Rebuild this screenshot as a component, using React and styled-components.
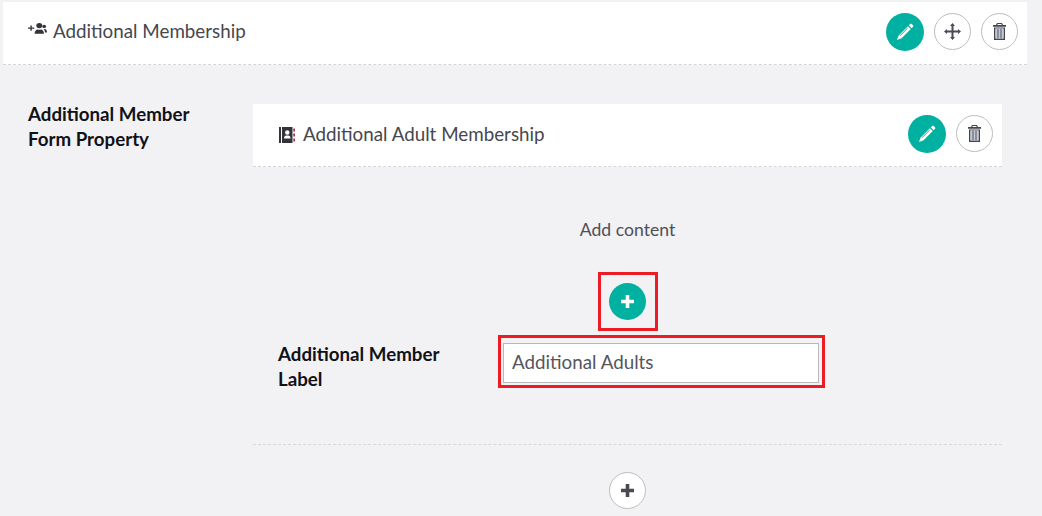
import React from 'react';
import styled, { createGlobalStyle } from 'styled-components';

const GlobalStyle = createGlobalStyle`
  html, body {
    margin: 0;
    padding: 0;
    background: #f2f2f5;
    overflow: hidden;
  }
  body {
    font-family: "Lato", "Open Sans", sans-serif;
    color: #4a4a52;
  }
`;

const Page = styled.div`
  width: 1042px;
  height: 516px;
  overflow: hidden;
  padding: 2px 15px 0 3px;
  box-sizing: border-box;
`;

const Header = styled.div`
  display: flex;
  align-items: center;
  height: 63px;
  box-sizing: border-box;
  background: #fff;
  border-bottom: 1px dashed #d5d5d8;
  padding: 0 9px 3px ${(p) => (p.$nested ? '26px' : '25px')};
`;

const HeaderIcon = styled.span`
  display: inline-flex;
  margin-right: ${(p) => (p.$nested ? '8px' : '6px')};
  margin-top: ${(p) => (p.$nested ? '3px' : '-6px')};
  color: #33333a;
`;

const Title = styled.span`
  flex: 1;
  font-size: 18.8px;
  line-height: 24px;
  color: #46464e;
  margin-top: ${(p) => (p.$nested ? '0' : '-2px')};
`;

const Actions = styled.div`
  display: flex;
  align-items: center;
  gap: 10px;
`;

const RoundButton = styled.button`
  display: flex;
  align-items: center;
  justify-content: center;
  flex: none;
  width: ${(p) => (p.$primary && !p.$small ? '38px' : '37px')};
  height: ${(p) => (p.$primary && !p.$small ? '38px' : '37px')};
  padding: 0;
  box-sizing: border-box;
  border-radius: 50%;
  cursor: pointer;
  border: ${(p) => (p.$primary ? 'none' : '1px solid #bdbdbd')};
  background: ${(p) => (p.$primary ? '#00b0a0' : '#fff')};
  color: ${(p) => (p.$primary ? '#fff' : '#4a4a52')};
`;

const Row = styled.div`
  display: flex;
  padding: 39px 25px 0 25px;
`;

const SideLabel = styled.div`
  width: 225px;
  flex: none;
  font-size: 18.72px;
  font-weight: 700;
  line-height: 25px;
  color: #111116;
  margin-top: -2px;
`;

const Content = styled.div`
  flex: 1;
`;

const Body = styled.div`
  display: flex;
  flex-direction: column;
  align-items: center;
`;

const AddText = styled.div`
  font-size: 17.6px;
  line-height: 22px;
  margin-top: 52px;
  color: #4f4f57;
`;

const Highlight = styled.div`
  border: 3px solid #ed1c24;
  box-sizing: border-box;
`;

const AddHighlight = styled(Highlight)`
  display: flex;
  align-items: center;
  justify-content: center;
  width: 60px;
  height: 59px;
  margin-top: 31px;
`;

const Field = styled.div`
  align-self: stretch;
  display: flex;
  align-items: flex-start;
  padding: 4px 0 0 25px;
`;

const FieldLabel = styled.div`
  width: 220px;
  flex: none;
  font-size: 18.72px;
  font-weight: 700;
  line-height: 25px;
  color: #111116;
  margin-top: 7px;
`;

const InputHighlight = styled(Highlight)`
  width: 327px;
  height: 53px;
  padding: 5px 3px 0 2px;
`;

const TextInput = styled.input`
  display: block;
  width: 316px;
  height: 40px;
  box-sizing: border-box;
  border: 1px solid #b9b9bd;
  background: #fff;
  padding: 0 8px 4px;
  font-family: inherit;
  font-size: 18.8px;
  color: #55555d;
  outline: none;
`;

const Divider = styled.div`
  align-self: stretch;
  border-top: 1px dashed #d8d8db;
  margin-top: 52px;
`;

const AddMore = styled(RoundButton)`
  margin-top: 27px;
`;

const PeopleIcon = () => (
  <svg width="19" height="12" viewBox="0 0 19 14" preserveAspectRatio="none" fill="currentColor">
    <path d="M0 5.200h2.400V2.800h1.400v2.400h2.400v1.400H3.800V9H2.400V6.600H0z" />
    <circle cx="11.300" cy="3" r="3" />
    <path d="M6.600 12.500c0-3 1.600-5 3-5 .5.300 1 .5 1.700.5s1.200-.2 1.700-.5c1.400 0 3 2 3 5z" />
    <circle cx="16.200" cy="4" r="1.900" />
    <path d="M15.600 7c.5.200 1 .2 1.400.1.900.2 2 1.400 2 3.900h-2c-.1-1.700-.6-3-1.400-4z" />
  </svg>
);

const BookIcon = () => (
  <svg width="16" height="16" viewBox="0 0 16 16">
    <rect x="0" y="0" width="2" height="16" fill="#33333a" />
    <rect x="3" y="0" width="10.500" height="16" fill="#33333a" />
    <rect x="14.300" y="1.500" width="1.700" height="3" fill="#9c3a44" />
    <rect x="14.300" y="6.500" width="1.700" height="3" fill="#9c3a44" />
    <rect x="14.300" y="11.500" width="1.700" height="3" fill="#9c3a44" />
    <circle cx="8.300" cy="5.500" r="2.200" fill="#fff" />
    <path d="M5 11.500c0-2 1.200-3 2.200-3h2.200c1 0 2.200 1 2.200 3z" fill="#fff" />
  </svg>
);

const PencilIcon = () => (
  <svg width="18" height="18" viewBox="0 0 19 19" fill="#fff">
    <path d="M14.800 1.200c.6-.6 1.400-.6 2 0l1 1c.6.600.6 1.400 0 2l-1.300 1.300-3-3z" />
    <path d="M12.600 3.400l3 3L5.900 16.200 1 18l1.800-4.900zM11.800 5.400l-7.800 7.800.5.500 7.800-7.800z" fillRule="evenodd" />
  </svg>
);

const MoveIcon = () => (
  <svg width="17" height="17" viewBox="0 0 17 17" fill="currentColor">
    <path d="M8.500 0l2.500 3H9.500v4.500H14V6l3 2.500-3 2.500V9.500H9.500V14H11l-2.500 3L6 14h1.500V9.500H3V11L0 8.500 3 6v1.500h4.500V3H6z" />
  </svg>
);

const TrashIcon = () => (
  <svg width="13" height="17" viewBox="0 0 13 17">
    <path d="M4 0h5l1 2h3v1.800H0V2h3zM4.700 1l-.4 1h4.400l-.4-1z" fill="#44444c" fillRule="evenodd" />
    <path d="M1 4.500h11V17H1zM2.500 5.500V15.500h8V5.500z" fill="#44444c" fillRule="evenodd" />
    <rect x="2.500" y="5.500" width="8" height="10" fill="#c0cad6" />
    <rect x="4.500" y="5.500" width="1" height="10" fill="#55555d" />
    <rect x="7.500" y="5.500" width="1" height="10" fill="#55555d" />
  </svg>
);

const PlusIcon = () => (
  <svg width="15" height="15" viewBox="0 0 15 15" fill="currentColor">
    <path d="M5.700 1h3.600v4.700H14v3.600H9.300V14H5.700V9.300H1V5.700h4.700z" />
  </svg>
);

const App = () => (
  <Page>
    <GlobalStyle />
    <Header>
      <HeaderIcon><PeopleIcon /></HeaderIcon>
      <Title>Additional Membership</Title>
      <Actions>
        <RoundButton $primary><PencilIcon /></RoundButton>
        <RoundButton><MoveIcon /></RoundButton>
        <RoundButton><TrashIcon /></RoundButton>
      </Actions>
    </Header>
    <Row>
      <SideLabel>Additional Member<br />Form Property</SideLabel>
      <Content>
        <Header $nested>
          <HeaderIcon $nested><BookIcon /></HeaderIcon>
          <Title $nested>Additional Adult Membership</Title>
          <Actions>
            <RoundButton $primary><PencilIcon /></RoundButton>
            <RoundButton><TrashIcon /></RoundButton>
          </Actions>
        </Header>
        <Body>
          <AddText>Add content</AddText>
          <AddHighlight>
            <RoundButton $primary $small><PlusIcon /></RoundButton>
          </AddHighlight>
          <Field>
            <FieldLabel>Additional Member<br />Label</FieldLabel>
            <InputHighlight>
              <TextInput defaultValue="Additional Adults" />
            </InputHighlight>
          </Field>
          <Divider />
          <AddMore><PlusIcon /></AddMore>
        </Body>
      </Content>
    </Row>
  </Page>
);

export default App;
